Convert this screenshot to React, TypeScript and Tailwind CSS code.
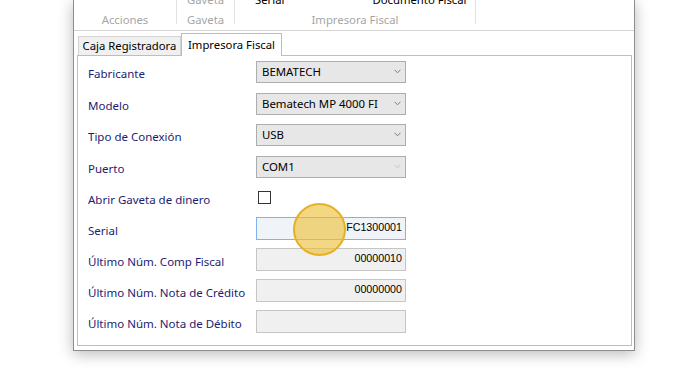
import React from "react";

type Row = {
  label: string;
  kind: "combo" | "check" | "text";
  value?: string;
  mt: string;
  disabled?: boolean;
  focused?: boolean;
};

const rows: Row[] = [
  { label: "Fabricante", kind: "combo", value: "BEMATECH", mt: "mt-[4px]" },
  { label: "Modelo", kind: "combo", value: "Bematech MP 4000 FI", mt: "mt-[9px]" },
  { label: "Tipo de Conexión", kind: "combo", value: "USB", mt: "mt-[8px]" },
  { label: "Puerto", kind: "combo", value: "COM1", mt: "mt-[9px]", disabled: true },
  { label: "Abrir Gaveta de dinero", kind: "check", mt: "mt-[8px]" },
  { label: "Serial", kind: "text", value: "FC1300001", mt: "mt-[8px]", focused: true },
  { label: "Último Núm. Comp Fiscal", kind: "text", value: "00000010", mt: "mt-[8px]" },
  { label: "Último Núm. Nota de Crédito", kind: "text", value: "00000000", mt: "mt-[8px]" },
  { label: "Último Núm. Nota de Débito", kind: "text", value: "", mt: "mt-[8px]" },
];

const Chevron = ({ light }: { light?: boolean }) => (
  <svg width="7" height="5" viewBox="0 0 7 5" className="ml-auto mr-[4px]">
    <path d="M0.5 0.8 L3.5 3.8 L6.5 0.8" fill="none" stroke={light ? "#c4c4c4" : "#7a7a7a"} strokeWidth="1" />
  </svg>
);

const Control = ({ row }: { row: Row }) => {
  if (row.kind === "combo") {
    return (
      <div className="flex items-center w-[150px] h-[22px] border border-[#adadad] bg-[#e7e7e7] pl-[5px] text-[11.4px] text-black font-['Noto_Sans',sans-serif]">
        <span className="leading-none">{row.value}</span>
        <Chevron light={row.disabled} />
      </div>
    );
  }
  if (row.kind === "check") {
    return <div className="w-[13px] h-[13px] ml-[2px] border border-[#333333] bg-white" />;
  }
  return (
    <div
      className={
        "flex justify-end w-[150px] h-[23px] border pr-[3px] pt-[4px] text-[10.7px] text-black leading-none font-['Liberation_Sans',Arial,sans-serif] " +
        (row.focused ? "border-[#7eb4ea] bg-[#f0f3f7]" : "border-[#c5c5c5] bg-[#f0f0f0]")
      }
    >
      {row.value}
    </div>
  );
};

const App: React.FC = () => {
  return (
    <div className="relative w-[689px] h-[385px] bg-white overflow-hidden font-['Noto_Sans',sans-serif]">
      <div className="ml-[73px] w-[562px] h-[351px] border-x border-b border-[#8e8e8e] bg-white shadow-[0_3px_14px_rgba(0,0,0,0.28)] flex flex-col">
        {/* ribbon */}
        <div className="flex h-[31px] border-b border-[#d5d5d5] text-[11.3px]">
          <div className="w-[102px] flex flex-col items-center">
            <span className="mt-[-7px] h-[14px]"></span>
            <span className="mt-[7px] text-[#a6a6a6] leading-none">Acciones</span>
          </div>
          <div className="w-px h-[24px] bg-[#e2e2e2]" />
          <div className="w-[57px] flex flex-col items-center">
            <span className="mt-[-7px] h-[14px] leading-[14px] text-[#a6a6a6]">Gaveta</span>
            <span className="mt-[7px] text-[#a6a6a6] leading-none">Gaveta</span>
          </div>
          <div className="w-px h-[24px] bg-[#e2e2e2]" />
          <div className="w-[240px] flex flex-col">
            <div className="flex mt-[-7px] h-[14px] leading-[14px] text-black">
              <span className="ml-[20px]">Serial</span>
              <span className="ml-[88px]">Documento Fiscal</span>
            </div>
            <span className="mt-[7px] self-center text-[#a6a6a6] leading-none">Impresora Fiscal</span>
          </div>
          <div className="w-px h-[24px] bg-[#e2e2e2]" />
        </div>

        {/* tabs */}
        <div className="flex flex-col ml-[3px] mr-[2px] mt-[2px]">
          <div className="flex items-end h-[22px] text-[11.3px] text-black">
            <div className="ml-[1px] h-[19px] w-[103px] border border-b-0 border-[#d3d3d3] bg-[#f0f0f0] flex items-center justify-center leading-none">
              Caja Registradora
            </div>
            <div className="relative z-10 h-[23px] -mb-px w-[101px] border border-b-0 border-[#bdbdbd] bg-white flex items-center justify-center leading-none">
              Impresora Fiscal
            </div>
          </div>
          <div className="h-[291px] border border-[#bdbdbd] bg-white pl-[10px] flex flex-col">
            {rows.map((row) => (
              <div key={row.label} className={"flex items-center h-[23px] " + row.mt}>
                <span className="w-[168px] pt-[5px] text-[11.5px] text-[#1c1c72] leading-none">{row.label}</span>
                <Control row={row} />
              </div>
            ))}
          </div>
        </div>
      </div>

      {/* cursor highlight */}
      <div className="absolute left-[293px] top-[203px] w-[53px] h-[53px] rounded-full border-2 border-[#e5b122] bg-[rgba(238,190,55,0.62)]" />
    </div>
  );
};

export default App;
